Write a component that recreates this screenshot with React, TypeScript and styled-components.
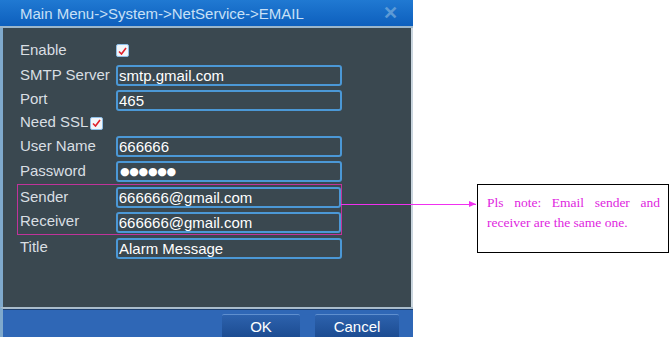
import React from "react";
import styled, { createGlobalStyle } from "styled-components";

const GlobalStyle = createGlobalStyle`
  html, body {
    margin: 0;
    padding: 0;
    background: #ffffff;
  }
  body {
    font-family: "Liberation Sans", Arial, sans-serif;
  }
`;

const Page = styled.div`
  width: 669px;
  height: 337px;
  display: flex;
  align-items: flex-start;
  overflow: hidden;
`;

const Dialog = styled.div`
  width: 413px;
  height: 337px;
  display: flex;
  flex-direction: column;
  background: #3a4850;
  flex-shrink: 0;
`;

const TitleBar = styled.div`
  height: 26px;
  display: flex;
  align-items: center;
  justify-content: space-between;
  padding: 0 15px 0 20px;
  background: linear-gradient(#2079d2, #0d5fbd);
  color: #c8e0f6;
  font-size: 15px;
  border-bottom: 2px solid #9bb6cb;
`;

const Close = styled.span`
  color: #6fa6da;
  font-size: 18px;
  font-weight: bold;
  opacity: 0.8;
`;

const Body = styled.div`
  flex: 1;
  display: flex;
  flex-direction: column;
  padding: 10px 0 0 14px;
  border-left: 3px solid #7fa9cc;
  border-right: 2px solid #c9d5de;
`;

const Row = styled.div<{ $h?: number; $pad?: number }>`
  height: ${(p) => p.$h ?? 25}px;
  display: flex;
  align-items: center;
  padding-left: ${(p) => p.$pad ?? 3}px;
`;

const Label = styled.span<{ $w?: number }>`
  width: ${(p) => (p.$w === undefined ? "96px" : `${p.$w}px`)};
  color: #d9dfe3;
  font-size: 15px;
  margin-top: -3px;
  white-space: nowrap;
`;

const Field = styled.div`
  width: 221px;
  height: 17px;
  border: 2px solid #4b98d6;
  border-radius: 3px;
  padding: 0 0 0 1px;
  display: flex;
  align-items: center;
  color: #ffffff;
  font-size: 15px;
  line-height: 17px;
`;

const Dots = styled.span`
  font-family: "DejaVu Sans", sans-serif;
  font-size: 11px;
  letter-spacing: -0.3px;
  padding-left: 1px;
`;

const Check = styled.span`
  width: 11px;
  height: 11px;
  border: 1px solid #8fbfe8;
  border-radius: 2px;
  background: #f2f6fa;
  display: inline-flex;
  align-items: center;
  justify-content: center;
`;

const Highlight = styled.div`
  position: relative;
  width: 323px;
  border: 1px solid #c0339a;
`;

const Connector = styled.div`
  position: absolute;
  left: 100%;
  top: 19px;
  width: 135px;
  height: 1px;
  background: #f030f0;

  &::after {
    content: "";
    position: absolute;
    right: 0;
    top: -3px;
    border-left: 7px solid #f030f0;
    border-top: 3.5px solid transparent;
    border-bottom: 3.5px solid transparent;
  }
`;

const Footer = styled.div`
  height: 28px;
  display: flex;
  justify-content: flex-end;
  align-items: flex-end;
  gap: 15px;
  padding-right: 14px;
  background: #2f67b6;
  border-top: 2px solid #a9bccb;
  box-shadow: inset 0 1px 0 #1d3f6e;
  border-left: 3px solid #7fa9cc;
`;

const Button = styled.button<{ $w: number }>`
  width: ${(p) => p.$w}px;
  height: 23px;
  border: none;
  border-top: 1px solid #5f8fcf;
  border-radius: 2px 2px 0 0;
  background: linear-gradient(#2d62ad, #1c4c92);
  color: #ffffff;
  font-family: "Liberation Sans", Arial, sans-serif;
  font-size: 15px;
  padding: 0;
`;

const Note = styled.div`
  margin: 184px 0 0 64px;
  width: 174px;
  height: 53px;
  border: 1px solid #000000;
  padding: 8px 8px 6px 9px;
  color: #e01fe0;
  font-family: "Liberation Serif", "Times New Roman", serif;
  font-size: 13.5px;
  line-height: 20px;
  text-align: justify;
`;

function CheckMark() {
  return (
    <Check>
      <svg width="9" height="8" viewBox="0 0 9 8">
        <path d="M1 4.5 L3.5 7 L8 1" stroke="#e0202a" strokeWidth="1.6" fill="none" />
      </svg>
    </Check>
  );
}

export default function App() {
  return (
    <Page>
      <GlobalStyle />
      <Dialog>
        <TitleBar>
          <span>Main Menu-&gt;System-&gt;NetService-&gt;EMAIL</span>
          <Close>✕</Close>
        </TitleBar>
        <Body>
          <Row>
            <Label>Enable</Label>
            <CheckMark />
          </Row>
          <Row>
            <Label>SMTP Server</Label>
            <Field>smtp.gmail.com</Field>
          </Row>
          <Row $h={24}>
            <Label>Port</Label>
            <Field>465</Field>
          </Row>
          <Row $h={22}>
            <Label $w={70}>Need SSL</Label>
            <CheckMark />
          </Row>
          <Row>
            <Label>User Name</Label>
            <Field>666666</Field>
          </Row>
          <Row>
            <Label>Password</Label>
            <Field>
              <Dots>●●●●●●</Dots>
            </Field>
          </Row>
          <Highlight>
            <Row $h={25} $pad={2}>
              <Label>Sender</Label>
              <Field>666666@gmail.com</Field>
            </Row>
            <Row $h={24} $pad={2}>
              <Label>Receiver</Label>
              <Field>666666@gmail.com</Field>
            </Row>
            <Connector />
          </Highlight>
          <Row $h={26}>
            <Label>Title</Label>
            <Field>Alarm Message</Field>
          </Row>
        </Body>
        <Footer>
          <Button $w={78}>OK</Button>
          <Button $w={84}>Cancel</Button>
        </Footer>
      </Dialog>
      <Note>Pls note: Email sender and receiver are the same one.</Note>
    </Page>
  );
}
